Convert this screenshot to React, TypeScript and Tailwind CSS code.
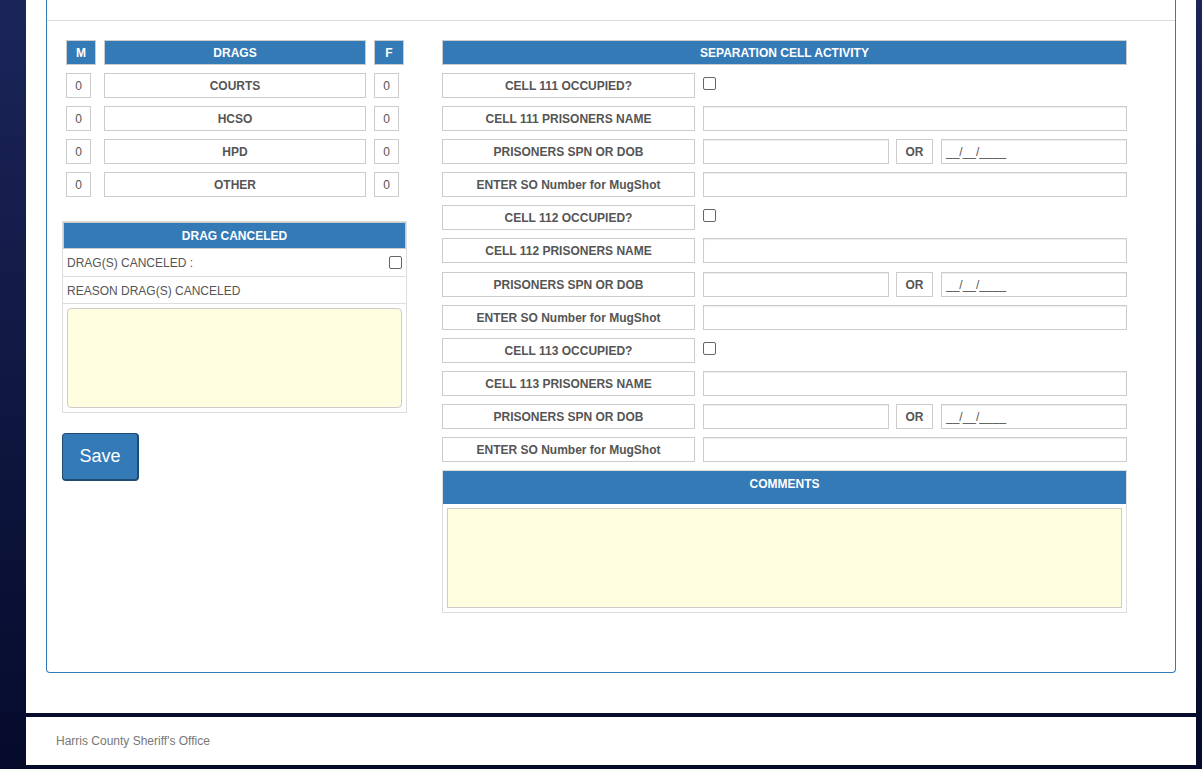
import React from "react";

const cellLabel =
  "flex h-[25px] items-center justify-center border border-[#ccc] bg-white text-[12px] font-bold text-[#555]";
const headCell =
  "flex h-[25px] items-center justify-center border border-[#ccc] bg-[#337ab7] text-[12px] font-bold text-white";
const inputBox =
  "h-[25px] border border-[#ccc] bg-white shadow-[inset_0_1px_1px_rgba(0,0,0,0.075)]";

const drags = ["COURTS", "HCSO", "HPD", "OTHER"];
const cells = ["111", "112", "113"];

function Checkbox() {
  return <div className="h-[13px] w-[13px] rounded-[2px] border border-[#666] bg-white" />;
}

function CellBlock({ num, nudge }: { num: string; nudge?: boolean }) {
  return (
    <>
      <div className="flex gap-[8px]">
        <div className={`${cellLabel} w-[253px] shrink-0`}>CELL {num} OCCUPIED?</div>
        <div className="pt-[4px]">
          <Checkbox />
        </div>
      </div>
      <div className="flex gap-[8px]">
        <div className={`${cellLabel} w-[253px] shrink-0`}>CELL {num} PRISONERS NAME</div>
        <div className={`${inputBox} flex-1`} />
      </div>
      <div className={nudge ? "mt-[1px] flex gap-[8px]" : "flex gap-[8px]"}>
        <div className={`${cellLabel} w-[253px] shrink-0`}>PRISONERS SPN OR DOB</div>
        <div className={`${inputBox} w-[186px] shrink-0`} />
        <div className={`${cellLabel} -ml-[1px] w-[37px] shrink-0`}>OR</div>
        <div className={`${inputBox} flex flex-1 items-center pl-[4px] text-[12px] text-[#555]`}>
          __/__/____
        </div>
      </div>
      <div className="flex gap-[8px]">
        <div className={`${cellLabel} w-[253px] shrink-0`}>ENTER SO Number for MugShot</div>
        <div className={`${inputBox} flex-1`} />
      </div>
    </>
  );
}

export default function App() {
  return (
    <div className="flex h-[769px] w-full bg-linear-to-b from-[#1b2559] to-[#060b2c] pl-[26px] font-['Liberation_Sans',Arial,sans-serif]">
      <div className="flex w-[1170px] flex-col">
        <div className="h-[713px] bg-white">
          <div className="ml-[20px] w-[1130px] rounded-b-[4px] border-x border-b border-[#337ab7]">
            <div className="h-[21px] border-b border-[#ddd]" />
            <div className="flex gap-[35px] pb-[59px] pl-[15px] pt-[19px]">
              {/* left column */}
              <div className="w-[345px]">
                <div className="grid grid-cols-[30px_262px_30px] gap-x-[8px] gap-y-[8px] px-[4px]">
                  <div className={headCell}>M</div>
                  <div className={headCell}>DRAGS</div>
                  <div className={headCell}>F</div>
                  {drags.map((d) => (
                    <React.Fragment key={d}>
                      <div className={`${cellLabel} w-[25px] font-normal text-[#2f5f98]`}>0</div>
                      <div className={cellLabel}>{d}</div>
                      <div className={`${cellLabel} w-[25px] font-normal text-[#2f5f98]`}>0</div>
                    </React.Fragment>
                  ))}
                </div>

                <div className="mt-[24px] border border-[#ddd]">
                  <div className="flex h-[27px] items-center justify-center border border-[#ccc] bg-[#337ab7] text-[12px] font-bold text-white">
                    DRAG CANCELED
                  </div>
                  <div className="flex h-[28px] items-center justify-between border-b border-[#ddd] pl-[4px] pr-[4px] text-[12px] text-[#555]">
                    <span>DRAG(S) CANCELED :</span>
                    <Checkbox />
                  </div>
                  <div className="flex h-[27px] items-center border-b border-[#ddd] pl-[4px] pt-[1px] text-[12px] text-[#555]">
                    REASON DRAG(S) CANCELED
                  </div>
                  <div className="p-[4px]">
                    <div className="h-[100px] rounded-[4px] border border-[#ccc] bg-[#fffde0]" />
                  </div>
                </div>

                <button className="mt-[20px] h-[48px] w-[77px] rounded-[4px] border border-b-2 border-r-2 border-[#1f4a72] bg-[#337ab7] text-[18px] text-white">
                  Save
                </button>
              </div>

              {/* right column */}
              <div className="flex w-[685px] flex-col gap-[8px]">
                <div className={headCell}>SEPARATION CELL ACTIVITY</div>
                {cells.map((c) => (
                  <CellBlock key={c} num={c} nudge={c === "112"} />
                ))}
                <div className="border border-[#ddd]">
                  <div className="flex h-[33px] items-center justify-center bg-[#337ab7] pb-[8px] text-[12px] font-bold text-white">
                    COMMENTS
                  </div>
                  <div className="p-[4px]">
                    <div className="h-[100px] border border-[#ccc] bg-[#fffde0]" />
                  </div>
                </div>
              </div>
            </div>
          </div>
        </div>
        <div className="mt-[4px] flex h-[48px] items-center bg-white pl-[30px] text-[12px] text-[#777]">
          Harris County Sheriff's Office
        </div>
      </div>
    </div>
  );
}
